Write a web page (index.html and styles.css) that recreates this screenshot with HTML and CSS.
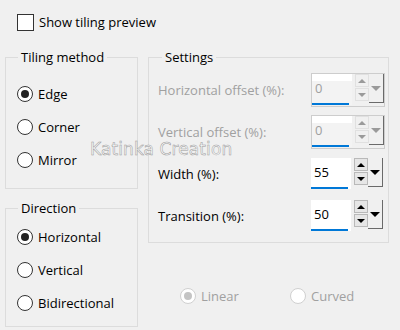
FILE: index.html
```html
<!DOCTYPE html>
<html lang="en">
<head>
    <meta charset="UTF-8">
    <title>Tiling</title>
    <link rel="stylesheet" href="styles.css">
</head>
<body>
    <div class="dialog">
        <div class="check"><span class="box"></span>Show tiling preview</div>

        <div class="columns">
            <div class="left">
                <fieldset class="group tiling">
                    <legend>Tiling method</legend>
                    <div class="radio on"><span class="dot"></span>Edge</div>
                    <div class="radio"><span class="dot"></span>Corner</div>
                    <div class="radio"><span class="dot"></span>Mirror</div>
                </fieldset>
                <fieldset class="group direction">
                    <legend>Direction</legend>
                    <div class="radio on"><span class="dot"></span>Horizontal</div>
                    <div class="radio"><span class="dot"></span>Vertical</div>
                    <div class="radio"><span class="dot"></span>Bidirectional</div>
                </fieldset>
            </div>

            <div class="right">
                <fieldset class="group settings">
                    <legend>Settings</legend>
                    <div class="row disabled">
                        <span class="label">Horizontal offset (%):</span>
                        <div class="spin">
                            <div class="field">0</div>
                            <div class="arrows"><span class="up"></span><span class="down"></span></div>
                            <span class="drop"></span>
                        </div>
                    </div>
                    <div class="row disabled">
                        <span class="label">Vertical offset (%):</span>
                        <div class="spin">
                            <div class="field">0</div>
                            <div class="arrows"><span class="up"></span><span class="down"></span></div>
                            <span class="drop"></span>
                        </div>
                    </div>
                    <div class="row">
                        <span class="label">Width (%):</span>
                        <div class="spin">
                            <div class="field">55</div>
                            <div class="arrows"><span class="up"></span><span class="down"></span></div>
                            <span class="drop"></span>
                        </div>
                    </div>
                    <div class="row">
                        <span class="label">Transition (%):</span>
                        <div class="spin">
                            <div class="field">50</div>
                            <div class="arrows"><span class="up"></span><span class="down"></span></div>
                            <span class="drop"></span>
                        </div>
                    </div>
                </fieldset>

                <div class="curve">
                    <div class="radio off on"><span class="dot"></span>Linear</div>
                    <div class="radio off"><span class="dot"></span>Curved</div>
                </div>
            </div>
        </div>

        <!-- watermark over the dialog -->
        <div class="watermark">Katinka Creation</div>
    </div>
</body>
</html>
```

FILE: styles.css
```css
body {
    margin: 0;
    background-color: #f0f0f0;
    font-family: "Open Sans", "Noto Sans", sans-serif;
    font-size: 13px;
    color: #000;
}

.dialog {
    position: relative;
    width: 400px;
    height: 330px;
    padding-top: 13px;
    box-sizing: border-box;
}

.check {
    display: flex;
    align-items: center;
    height: 18px;
    margin-left: 17px;
}

.check .box {
    width: 15px;
    height: 15px;
    border: 1px solid #333;
    background: #fff;
    margin-right: 5px;
}

.columns {
    display: flex;
    margin-top: 18px;
}

.left {
    width: 133px;
    margin-left: 5px;
}

.right {
    width: 241px;
    margin-left: 10px;
}

fieldset.group {
    margin: 0;
    padding: 0;
    min-width: 0;
    border: 1px solid #dcdcdc;
}

fieldset.group legend {
    margin-left: 1px;
    padding: 0 3px;
    line-height: 16px;
}

fieldset.group.tiling {
    padding: 12px 0 12px 11px;
}

fieldset.group.direction {
    margin-top: 11px;
    padding: 4px 0 7px 11px;
}

/* radio buttons */
.radio {
    display: flex;
    align-items: center;
    height: 33px;
}

.radio .dot {
    width: 16px;
    height: 16px;
    box-sizing: border-box;
    border: 1px solid #333;
    border-radius: 50%;
    background: #fff;
    margin-right: 5px;
    display: flex;
    align-items: center;
    justify-content: center;
}

.radio.on .dot::after {
    content: "";
    width: 8px;
    height: 8px;
    border-radius: 50%;
    background: #222;
}

.radio.off {
    color: #a0a0a0;
}

.radio.off .dot {
    border-color: #d0d0d0;
}

.radio.off.on .dot::after {
    background: #c4c4c4;
}

/* settings */
fieldset.group.settings {
    padding: 8px 5px 9px 9px;
}

fieldset.group.settings legend {
    margin-left: 4px;
}

.row {
    display: flex;
    align-items: center;
    justify-content: space-between;
    height: 34px;
    margin-bottom: 8px;
}

.row:last-child {
    margin-bottom: 0;
}

.row.disabled .label {
    color: #a0a0a0;
}

.spin {
    display: flex;
    align-items: flex-start;
    height: 32px;
}

.field {
    width: 40px;
    height: 31px;
    padding: 5px 0 0 3px;
    box-sizing: border-box;
    background: linear-gradient(#0078d7, #0078d7) no-repeat left bottom / 37px 2px, #fff;
}

.arrows {
    display: flex;
    flex-direction: column;
    gap: 1px;
    margin-left: 3px;
}

.arrows span {
    width: 14px;
    height: 13px;
    box-sizing: border-box;
    border: 1px solid #b9b9b9;
    background: #e6e6e6;
    display: flex;
    align-items: center;
    justify-content: center;
}

.arrows .up::after {
    content: "";
    border-left: 4px solid transparent;
    border-right: 4px solid transparent;
    border-bottom: 4px solid #000;
}

.arrows .down::after {
    content: "";
    border-left: 4px solid transparent;
    border-right: 4px solid transparent;
    border-top: 4px solid #000;
}

.drop {
    width: 15px;
    height: 29px;
    box-sizing: border-box;
    border-right: 1px solid #6a6a6a;
    border-bottom: 1px solid #6a6a6a;
    display: flex;
    align-items: center;
    justify-content: center;
}

.drop::after {
    content: "";
    border-left: 5px solid transparent;
    border-right: 5px solid transparent;
    border-top: 5px solid #000;
}

.row.disabled .spin {
    border: 1px solid #cdcdcd;
    margin-right: -2px;
}

.row.disabled .field {
    color: #a0a0a0;
    background: linear-gradient(#0078d7, #0078d7) no-repeat left bottom / 37px 2px,
                linear-gradient(#fff 7px, #f3f3f3 7px);
}

.row.disabled .arrows span {
    background: #f0f0f0;
    border-color: #e0e0e0;
}

.row.disabled .up::after {
    border-bottom-color: #9a9a9a;
}

.row.disabled .down::after,
.row.disabled .drop::after {
    border-top-color: #9a9a9a;
}

.curve {
    display: flex;
    gap: 20px;
    margin-top: 36px;
    margin-left: 32px;
}

.curve .radio {
    width: 90px;
}

.watermark {
    position: absolute;
    left: 90px;
    top: 142px;
    font-family: "DejaVu Sans", sans-serif;
    font-size: 17px;
    line-height: 14px;
    letter-spacing: 0.1px;
    color: #fafafa;
    -webkit-text-stroke: 0.5px #9a9a9a;
}
```
